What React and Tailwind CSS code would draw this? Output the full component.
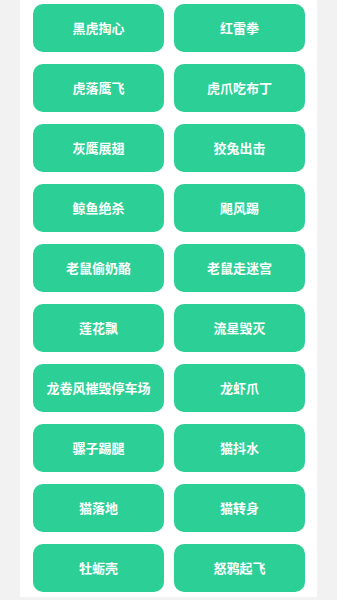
const moves = [
  ['黑虎掏心', '红雷拳'],
  ['虎落鹰飞', '虎爪吃布丁'],
  ['灰鹰展翅', '狡兔出击'],
  ['鲸鱼绝杀', '飓风踢'],
  ['老鼠偷奶酪', '老鼠走迷宫'],
  ['莲花飘', '流星毁灭'],
  ['龙卷风摧毁停车场', '龙虾爪'],
  ['骡子踢腿', '猫抖水'],
  ['猫落地', '猫转身'],
  ['牡蛎壳', '怒鸦起飞'],
];

export default function App() {
  return (
    <div
      className="w-[337px] h-[600px] bg-[#f2f2f2] overflow-hidden"
      style={{ fontFamily: '"Noto Sans CJK SC", "Noto Sans", sans-serif' }}
    >
      <div className="ml-[20px] w-[297px] h-[597px] bg-white pl-[13px] pt-[4px]">
        <div className="grid grid-cols-[131px_131px] gap-x-[10px] gap-y-[12px]">
          {moves.flat().map((name) => (
            <button
              key={name}
              className="h-[48px] rounded-[10px] bg-[#2ccf95] text-white text-[13px] font-bold flex items-center justify-center"
            >
              {name}
            </button>
          ))}
        </div>
      </div>
    </div>
  );
}
